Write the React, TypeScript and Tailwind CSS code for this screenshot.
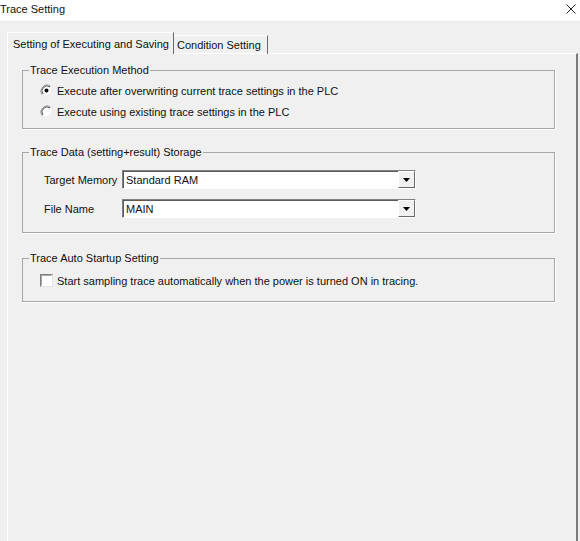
import type { ReactNode } from 'react'

function Radio({ checked }: { checked?: boolean }) {
  return (
    <svg width="13" height="13" viewBox="0 0 13 13" className="shrink-0">
      <circle cx="6.5" cy="6.5" r="6" fill="#fff" />
      <path d="M2.3 10.7 A6 6 0 0 1 10.7 2.3" fill="none" stroke="#8a8a8a" strokeWidth="1" />
      <path d="M10.7 2.3 A6 6 0 0 1 2.3 10.7" fill="none" stroke="#e3e3e3" strokeWidth="1" />
      <path d="M3 10 A5 5 0 0 1 10 3" fill="none" stroke="#5a5a5a" strokeWidth="1" />
      {checked && <circle cx="6.5" cy="6.5" r="2" fill="#000" />}
    </svg>
  )
}

function Checkbox() {
  return (
    <div className="w-[13px] h-[13px] shrink-0 border border-t-[#808080] border-l-[#808080] border-b-[#e3e3e3] border-r-[#e3e3e3] bg-[#f4f4f4]">
      <div className="w-full h-full border border-t-[#a8a8a8] border-l-[#a8a8a8] border-b-white border-r-white bg-white" />
    </div>
  )
}

function Combo({ value }: { value: string }) {
  return (
    <div className="flex w-[294px] h-[19px] border border-t-[#808080] border-l-[#808080] border-b-white border-r-white bg-white">
      <div className="flex-1 flex items-center pl-[2px] border-t border-l border-[#5a5a5a] border-b-0 border-r-0">
        {value}
      </div>
      <div className="w-[17px] h-[17px] flex items-center justify-center bg-[#f0f0f0] border border-t-white border-l-white border-b-[#696969] border-r-[#696969]">
        <svg width="7" height="4" viewBox="0 0 7 4">
          <path d="M0 0 H7 L3.5 4 Z" fill="#000" />
        </svg>
      </div>
    </div>
  )
}

function Group({ title, className, children }: { title: string; className: string; children: ReactNode }) {
  return (
    <fieldset className={`w-[533px] border border-[#a7a7a7] shadow-[1px_1px_0_#fff] ${className}`}>
      <legend className="ml-[6px] px-[1px] leading-[14px]">{title}</legend>
      {children}
    </fieldset>
  )
}

export default function App() {
  return (
    <div className="w-[580px] h-[541px] overflow-hidden bg-[#f0f0f0] text-[11px] leading-[14px] text-[#111] font-['Liberation_Sans',Arial,sans-serif]">
      <div className="h-[22px] bg-white flex justify-between border-b border-[#ececec]">
        <div className="pt-[2px] text-[11px]">Trace Setting</div>
        <svg width="10" height="10" viewBox="0 0 10 10" className="mt-[4px] mr-[4px]">
          <path d="M0.5 0.5 L9.5 9.5 M9.5 0.5 L0.5 9.5" stroke="#222" strokeWidth="1" />
        </svg>
      </div>

      <div className="pl-[7px] pt-[10px]">
        <div className="flex items-end -mb-px relative z-10">
          <div className="w-[167px] h-[22px] pl-[5px] pt-[4px] bg-[#f0f0f0] border-t border-l border-white border-r border-r-[#696969]">
            Setting of Executing and Saving
          </div>
          <div className="w-[94px] h-[19px] pl-[3px] pt-[2px] border-t border-white border-r border-r-[#696969]">
            Condition Setting
          </div>
        </div>

        <div className="w-[571px] h-[500px] border-t border-l border-white border-r-2 border-r-[#7a7a7a] pl-[14px] pt-[9px]">
          <Group title="Trace Execution Method" className="pb-[6px]">
            <div className="pt-[3px] pl-[17px]">
              <div className="h-[21px] flex items-center gap-[4px]">
                <Radio checked />
                <span>Execute after overwriting current trace settings in the PLC</span>
              </div>
              <div className="h-[21px] flex items-center gap-[4px]">
                <Radio />
                <span>Execute using existing trace settings in the PLC</span>
              </div>
            </div>
          </Group>

          <Group title="Trace Data (setting+result) Storage" className="mt-[16px] pb-[14px]">
            <div className="pt-[11px] pl-[21px] flex flex-col gap-[10px]">
              <div className="flex items-center">
                <span className="w-[78px]">Target Memory</span>
                <Combo value="Standard RAM" />
              </div>
              <div className="flex items-center">
                <span className="w-[78px]">File Name</span>
                <Combo value="MAIN" />
              </div>
            </div>
          </Group>

          <Group title="Trace Auto Startup Setting" className="mt-[18px] pb-[10px]">
            <div className="pt-[5px] pl-[17px]">
              <div className="h-[21px] flex items-center gap-[4px]">
                <Checkbox />
                <span>Start sampling trace automatically when the power is turned ON in tracing.</span>
              </div>
            </div>
          </Group>
        </div>
      </div>
    </div>
  )
}
